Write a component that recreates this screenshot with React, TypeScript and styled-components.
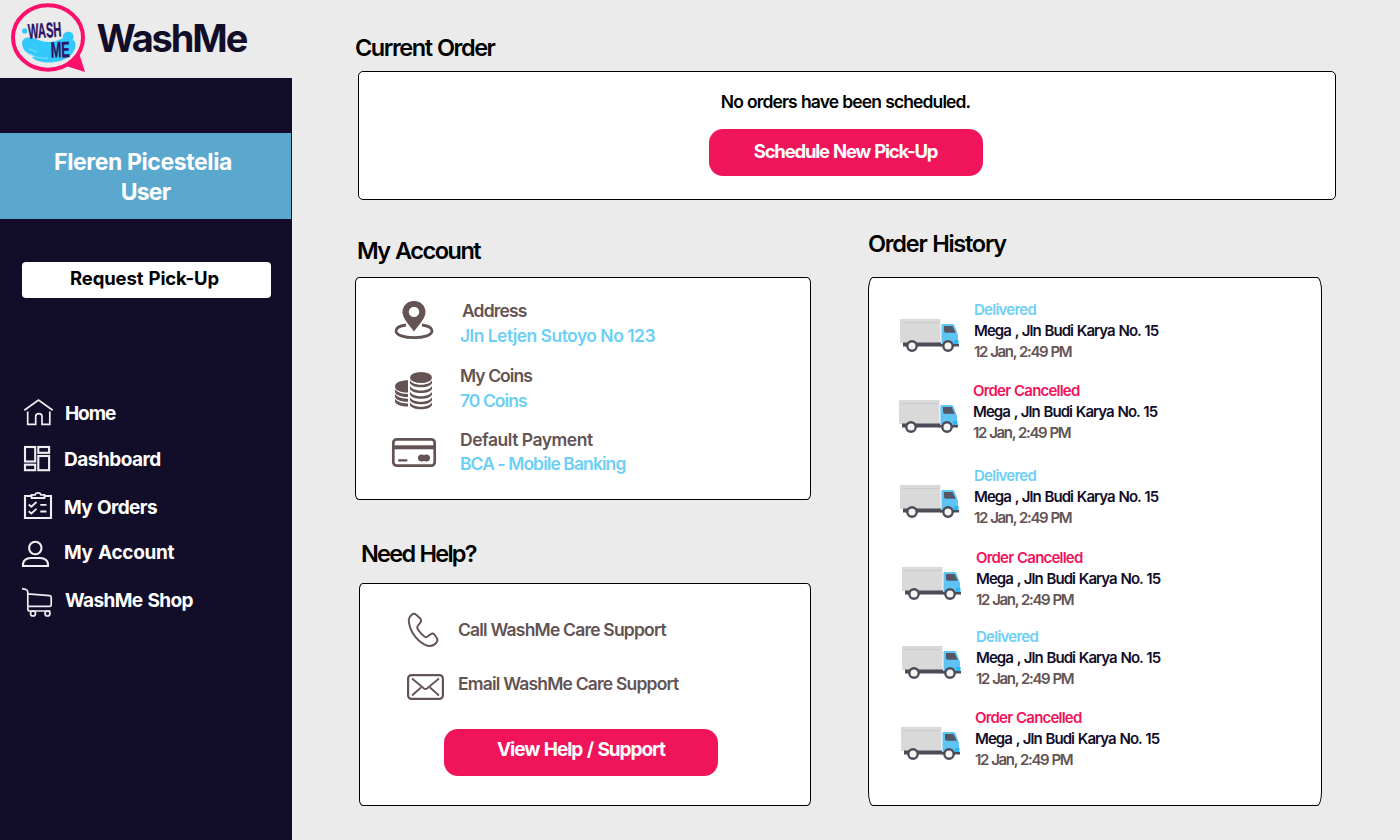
import React from "react";
import styled, { createGlobalStyle } from "styled-components";

const ink = "#120e2a";
const pink = "#f0145a";
const sky = "#6dcff6";
const brown = "#635353";

const GlobalStyle = createGlobalStyle`
  * { box-sizing: border-box; }
  body { margin: 0; background: #ebebeb; font-family: Inter, "Liberation Sans", sans-serif; }
  button { font-family: inherit; border: 0; padding: 0; cursor: pointer; }
  svg { display: block; flex: none; }
`;

const Page = styled.div`
  display: grid;
  grid-template-columns: 292px 1fr;
  width: 1400px;
  height: 840px;
  overflow: hidden;
  background: #ebebeb;
`;

const Side = styled.aside`
  display: flex;
  flex-direction: column;
`;

const Brand = styled.header`
  display: flex;
  align-items: center;
  height: 78px;
  padding-left: 8px;
`;

const BrandName = styled.h1`
  margin: 0 0 2px 6.5px;
  font-size: 38px;
  font-weight: 700;
  line-height: 40px;
  letter-spacing: -2.1px;
  color: ${ink};
`;

const SidePanel = styled.div`
  flex: 1;
  padding-top: 55px;
  background: ${ink};
`;

const UserBlock = styled.div`
  display: flex;
  flex-direction: column;
  align-items: center;
  width: 291px;
  height: 86px;
  padding: 14px 0 0;
  background: #5ba8cf;
  color: #fff;
  font-size: 23px;
  font-weight: 700;
  line-height: 30px;
`;

const UserLine = styled.span<{ $shift: number; $track: number }>`
  margin-left: ${(p) => p.$shift}px;
  letter-spacing: ${(p) => p.$track}px;
`;

const RequestButton = styled.button`
  display: block;
  width: 249px;
  height: 36px;
  margin: 43px 0 0 22px;
  padding: 0 4px 4px 0;
  border-radius: 4px;
  background: #fff;
  color: #000;
  font-size: 18.5px;
  font-weight: 650;
  letter-spacing: -0.15px;
  word-spacing: 1px;
`;

const Nav = styled.nav`
  display: flex;
  flex-direction: column;
  padding: 99px 0 0 20px;
`;

const NavItem = styled.a<{ $gap: number; $inset: number; $track: number }>`
  display: flex;
  align-items: center;
  height: 32px;
  margin-top: ${(p) => p.$gap}px;
  color: #fff;
  font-size: 19px;
  font-weight: 700;
  letter-spacing: ${(p) => p.$track}px;
  word-spacing: 1px;
  span { margin-left: ${(p) => p.$inset}px; }
`;

const Main = styled.main`
  padding: 33px 0 0 63px;
`;

const Heading = styled.h2<{ $inset?: number; $track: number }>`
  margin: 0 0 0 ${(p) => p.$inset ?? 0}px;
  font-size: 23.5px;
  font-weight: 620;
  line-height: 30px;
  letter-spacing: ${(p) => p.$track}px;
  word-spacing: 1px;
  white-space: nowrap;
  color: #000;
`;

const Card = styled.section<{ $w: number; $h: number; $radius: string }>`
  width: ${(p) => p.$w}px;
  height: ${(p) => p.$h}px;
  border: 1px solid #000;
  border-radius: ${(p) => p.$radius};
  background: #fff;
`;

const CurrentCard = styled(Card)`
  display: flex;
  flex-direction: column;
  align-items: center;
  margin: 8px 0 0 3px;
  padding: 18px 3px 0 0;
`;

const EmptyNote = styled.p`
  margin: 0 0 16px;
  font-size: 17.5px;
  font-weight: 600;
  line-height: 23px;
  letter-spacing: -0.9px;
  word-spacing: 0.7px;
  color: #000;
`;

const PinkButton = styled.button<{ $track: number; $size?: number }>`
  width: 274px;
  height: 47px;
  padding: 0 0 3px;
  border-radius: 14px;
  background: ${pink};
  color: #fff;
  font-size: ${(p) => p.$size ?? 19}px;
  font-weight: 700;
  letter-spacing: ${(p) => p.$track}px;
  word-spacing: 1px;
`;

const Columns = styled.div`
  display: grid;
  grid-template-columns: 513px 1fr;
  align-items: start;
`;

const LeftColumn = styled.div`
  padding-top: 36px;
`;

const RightColumn = styled.div`
  padding-top: 29px;
`;

const AccountCard = styled(Card)`
  margin-top: 11px;
  padding: 20px 0 0 35px;
`;

const AccountRow = styled.div<{ $gap: number }>`
  display: flex;
  height: 50px;
  margin-top: ${(p) => p.$gap}px;
  svg { margin-top: 1px; }
`;

const AccountText = styled.div`
  margin-left: 23px;
  font-size: 17.5px;
  font-weight: 570;
  white-space: nowrap;
`;

const AccountLabel = styled.div<{ $inset?: number; $track: number }>`
  padding-left: ${(p) => p.$inset ?? 0}px;
  line-height: 25px;
  letter-spacing: ${(p) => p.$track}px;
  color: ${brown};
`;

const AccountValue = styled.div<{ $track: number; $line?: number }>`
  line-height: ${(p) => p.$line ?? 25}px;
  letter-spacing: ${(p) => p.$track}px;
  color: ${sky};
`;

const HelpBlock = styled.div`
  padding-top: 39px;
`;

const HelpCard = styled(Card)`
  margin: 14px 0 0 4px;
  padding: 26px 0 0 44px;
`;

const HelpRow = styled.div<{ $gap: number; $track: number }>`
  display: flex;
  align-items: center;
  height: 40px;
  margin-top: ${(p) => p.$gap}px;
  font-size: 17.5px;
  font-weight: 570;
  letter-spacing: ${(p) => p.$track}px;
  color: ${brown};
  span { margin: 0 0 2px 10px; }
`;

const HelpAction = styled.div`
  padding: 25px 0 0 40px;
`;

const HelpButton = styled(PinkButton)`
  padding-bottom: 6px;
`;

const HistoryCard = styled(Card)`
  margin-top: 18px;
  padding: 21px 0 0 30px;
`;

const HistoryRow = styled.article<{ $gap: number; $shift: number }>`
  display: flex;
  height: 63px;
  margin-top: ${(p) => p.$gap}px;
  padding-left: ${(p) => p.$shift}px;
  svg { margin-top: 20px; }
`;

const OrderText = styled.div`
  margin-left: 14px;
  font-size: 15px;
  font-weight: 600;
  line-height: 21px;
  white-space: nowrap;
  word-spacing: 0.8px;
`;

const Status = styled.div<{ $cancelled: boolean }>`
  color: ${(p) => (p.$cancelled ? pink : sky)};
  letter-spacing: ${(p) => (p.$cancelled ? -0.8 : -0.75)}px;
`;

const Place = styled.div`
  color: ${ink};
  letter-spacing: -0.93px;
`;

const When = styled.div`
  color: ${brown};
  letter-spacing: -1.35px;
`;

const Logo = () => (
  <svg width="82" height="76" viewBox="8 1 82 76">
    <path d="M66 66 L85 72 L79 53 Z" fill="#ff0f6b" />
    <ellipse cx="48" cy="37.500" rx="35" ry="32.300" fill="#ebebeb" stroke="#ff0f6b" strokeWidth="4" />
    <circle cx="24.700" cy="31" r="2.700" fill="#33c9fc" />
    <path
      d="M22 42 C24 36 30 37 36 39 C45 43 54 43 63 38 C62 34 66 31 70 32 C74 33 74 37 73 40 C77 42 76 49 72 54 C65 61 55 63 46 62.500 C40 62 34 60 32 57 C36 57 34 55 30 54 C25 53 22 48 22 42 Z"
      fill="#33c9fc"
    />
    <path d="M26 52 C31 56 40 59 48 58 M29 49 L37 52" fill="none" stroke="#8fe0fb" strokeWidth="1" />
    <g fill="#2b1464" stroke="#2b1464" strokeWidth="0.400" fontFamily="Liberation Sans, sans-serif" fontWeight="700">
      <text fontSize="21" transform="translate(28.5 38.800) rotate(-4) scale(0.53 1)">
        WASH
      </text>
      <text fontSize="22" transform="translate(51 57.500) rotate(-2) scale(0.58 1)">
        ME
      </text>
    </g>
  </svg>
);

const navStroke = { fill: "none", stroke: "#efeef3" };

const HomeIcon = () => (
  <svg width="34" height="32" viewBox="20 397 34 32" {...navStroke} strokeWidth="1.700">
    <path d="M24.300 410.300 L38.500 400 L52.700 410.300" />
    <path d="M27.700 411.500 V424.300 H35.700 V416.500 C35.700 412.600 42 412.600 42 416.500 V424.300 H49.800 V411.500" />
  </svg>
);

const DashboardIcon = () => (
  <svg width="34" height="32" viewBox="20 443 34 32" {...navStroke} strokeWidth="2.100">
    <rect x="25" y="447" width="10.200" height="14.500" />
    <rect x="38.300" y="447" width="10.800" height="5.800" />
    <rect x="25" y="464.700" width="10.200" height="5.500" />
    <rect x="38.300" y="456" width="10.800" height="14.200" />
  </svg>
);

const OrdersIcon = () => (
  <svg width="34" height="32" viewBox="20 491 34 32" {...navStroke} strokeWidth="2.100">
    <path d="M31 496 H25 V518 H51 V496 H45" />
    <path d="M31.500 498 V494.800 H35 C36 492.300 40 492.300 41 494.800 H44.500 V498 Z" strokeWidth="1.800" />
    <path d="M28.700 504.500 L31.300 506.700 L36.500 502 M28.700 511.300 L31.300 513.500 L36.500 508.800 M40.300 504.800 H46.500 M40.300 511.500 H46.500" strokeWidth="1.800" />
  </svg>
);

const AccountIcon = () => (
  <svg width="34" height="32" viewBox="20 536 34 32" {...navStroke} strokeWidth="2.100">
    <circle cx="35.300" cy="548" r="6.200" />
    <path d="M23 566 C22.500 560.500 26 558 31 558 H40 C45 558 48.500 560.500 48 566 Z" />
  </svg>
);

const CartIcon = () => (
  <svg width="34" height="34" viewBox="20 583 34 34" {...navStroke} strokeWidth="1.700">
    <path d="M22 588.700 L25.500 589.300 C27 589.700 27.700 590.500 27.800 592 V606.500 M27.800 593.800 L49.500 595.600 C50.800 595.700 51.200 596.300 51.200 597.300 V604.500 C51.200 605.700 50.500 606.300 49.500 606.300 H29 C27 607 27.500 611 29.500 611 H50.500" />
    <circle cx="33" cy="613.500" r="2.500" />
    <circle cx="47.500" cy="613.500" r="2.500" />
  </svg>
);

const PinIcon = () => (
  <svg width="46" height="50" viewBox="391 299 46 50">
    <path
      fillRule="evenodd"
      fill={brown}
      d="M414 301 C420.600 301 425.500 305.800 425.500 312 C425.500 318.500 419 324.500 414 331.500 C409 324.500 402.500 318.500 402.500 312 C402.500 305.800 407.400 301 414 301 Z M414 306.700 A5.200 5.200 0 1 0 414 317.100 A5.200 5.200 0 1 0 414 306.700 Z"
    />
    <path d="M406 325 C400 325.800 396 328 396 331 C396 335 404 337.700 414 337.700 C424 337.700 432 335 432 331 C432 328 428 325.800 422 325" fill="none" stroke={brown} strokeWidth="2.800" />
  </svg>
);

const CoinsIcon = () => (
  <svg width="46" height="50" viewBox="391 364 46 50">
    <ellipse cx="421" cy="377.500" rx="11" ry="5.500" fill={brown} />
    <path d="M408 380.300 C401 380.300 395 382.500 395 386.500 C395 390.500 401 392.500 408 392.500 Z" fill={brown} />
    <g fill={brown}>
      {[0, 5.7, 11.4, 17, 22].map((dy) => (
        <path key={dy} transform={`translate(0 ${dy})`} d="M410 380.300 C413 386.300 429 386.300 432 380.300 V383 C430.500 388.700 411.500 388.700 410 383 Z" />
      ))}
      {[0, 4.8, 9.4].map((dy) => (
        <path key={dy} transform={`translate(0 ${dy})`} d="M395 389.300 C397 392.300 402 394 408 394 V397 C401 397 396 395.500 395 392 Z" />
      ))}
    </g>
  </svg>
);

const PaymentIcon = () => (
  <svg width="46" height="50" viewBox="391 428 46 50">
    <rect x="393.300" y="439.300" width="41.400" height="26.400" rx="3.500" fill="none" stroke={brown} strokeWidth="2.700" />
    <rect x="393" y="445.300" width="42" height="4" fill={brown} />
    <rect x="398" y="459.200" width="9.500" height="2.300" rx="1" fill={brown} />
    <circle cx="421.600" cy="458" r="3.600" fill={brown} />
    <circle cx="426.400" cy="458" r="3.600" fill={brown} />
  </svg>
);

const PhoneIcon = () => (
  <svg width="44" height="40" viewBox="404 610 44 40" fill="none" stroke={brown} strokeWidth="1.900" strokeLinejoin="round">
    <path d="M412 614.600 C413.500 613.500 415 613.600 416.200 614.800 L420.300 618.500 C421.500 620 421.300 621.300 420.300 622.700 L417.600 626 C417 627 417.200 628.300 417.900 629.400 C419.800 632.300 422 634.600 424.700 636.700 C425.700 637.400 426.700 637.300 427.600 636.600 L430.600 634.200 C432 633.200 433.500 633.300 434.500 634.500 L436.800 638 C437.700 639.500 437.500 641.300 436.400 642.600 C434.500 645 432.500 646 430 646 C426.500 646 422.700 644 418.800 640.500 C414 636 410 629.500 408.900 622.500 C408.400 619 409.300 616.500 412 614.600 Z" />
  </svg>
);

const MailIcon = () => (
  <svg width="44" height="40" viewBox="404 664 44 40" fill="none" stroke={brown} strokeWidth="2.200" strokeLinejoin="round">
    <rect x="408.100" y="675.100" width="34.800" height="23.800" rx="3.500" />
    <path d="M412 678.500 L424 688.500 Q425.500 689.500 427 688.500 L439 678.500 M412 695.500 L421 687.500 M439 695.500 L430 687.500" strokeWidth="1.800" />
  </svg>
);

const TruckIcon = () => (
  <svg width="60" height="34" viewBox="0 0 60 34">
    <rect x="0" y="0" width="40.500" height="24" fill="#d9d9da" />
    <path d="M2 3.500 H39" stroke="#cbcbcd" strokeWidth="1" />
    <path d="M3 23.500 H41 V27.500 H3 Z" fill="#4d4b58" />
    <path d="M41.500 6 Q41.500 5 42.500 5 H52 C53.500 5 54 5.500 54.500 6.500 L58 16 V26.500 H41.500 Z" fill="#5fc3f4" />
    <path d="M44 7 H52.500 L55.800 13.800 H46.500 C45 13.800 44 13 44 11.500 Z" fill="#555665" />
    <path d="M54 21 H58.500 V25.500 H54 Z" fill="#2bb5f2" />
    <path d="M40 25 H59 V27.500 H40 Z" fill="#4d4b58" />
    <circle cx="12" cy="27" r="4.700" fill="#f4f4f4" stroke="#4d4b58" strokeWidth="2.400" />
    <circle cx="48" cy="27" r="4.700" fill="#f4f4f4" stroke="#4d4b58" strokeWidth="2.400" />
  </svg>
);

const navItems = [
  { label: "Home", icon: <HomeIcon />, gap: 0, inset: 11, track: -1.1 },
  { label: "Dashboard", icon: <DashboardIcon />, gap: 14, inset: 10, track: -0.5 },
  { label: "My Orders", icon: <OrdersIcon />, gap: 16, inset: 10, track: -0.6 },
  { label: "My Account", icon: <AccountIcon />, gap: 13, inset: 10, track: -0.3 },
  { label: "WashMe Shop", icon: <CartIcon />, gap: 16, inset: 11, track: -0.6 },
];

const orders = [
  { cancelled: false, gap: 0, shift: 1 },
  { cancelled: true, gap: 18, shift: 0 },
  { cancelled: false, gap: 22, shift: 1 },
  { cancelled: true, gap: 19, shift: 3 },
  { cancelled: false, gap: 16, shift: 3 },
  { cancelled: true, gap: 18, shift: 2 },
];

export default function App() {
  return (
    <>
      <GlobalStyle />
      <Page>
        <Side>
          <Brand>
            <Logo />
            <BrandName>WashMe</BrandName>
          </Brand>
          <SidePanel>
            <UserBlock>
              <UserLine $shift={-5} $track={-0.4}>Fleren Picestelia</UserLine>
              <UserLine $shift={0} $track={-0.8}>User</UserLine>
            </UserBlock>
            <RequestButton>Request Pick-Up</RequestButton>
            <Nav>
              {navItems.map((n) => (
                <NavItem key={n.label} $gap={n.gap} $inset={n.inset} $track={n.track}>
                  {n.icon}
                  <span>{n.label}</span>
                </NavItem>
              ))}
            </Nav>
          </SidePanel>
        </Side>
        <Main>
          <Heading $track={-1.45}>Current Order</Heading>
          <CurrentCard $w={978} $h={129} $radius="5px">
            <EmptyNote>No orders have been scheduled.</EmptyNote>
            <PinkButton $size={18.5} $track={-1.2}>Schedule New Pick-Up</PinkButton>
          </CurrentCard>
          <Columns>
            <LeftColumn>
              <Heading $inset={2} $track={-1.5}>My Account</Heading>
              <AccountCard $w={456} $h={223} $radius="4px / 6px">
                <AccountRow $gap={0}>
                  <PinIcon />
                  <AccountText>
                    <AccountLabel $inset={2} $track={-0.85}>Address</AccountLabel>
                    <AccountValue $track={-0.53}>Jln Letjen Sutoyo No 123</AccountValue>
                  </AccountText>
                </AccountRow>
                <AccountRow $gap={15}>
                  <CoinsIcon />
                  <AccountText>
                    <AccountLabel $track={-0.95}>My Coins</AccountLabel>
                    <AccountValue $track={-0.95}>70 Coins</AccountValue>
                  </AccountText>
                </AccountRow>
                <AccountRow $gap={14}>
                  <PaymentIcon />
                  <AccountText>
                    <AccountLabel $track={-0.48}>Default Payment</AccountLabel>
                    <AccountValue $track={-0.92} $line={24}>BCA - Mobile Banking</AccountValue>
                  </AccountText>
                </AccountRow>
              </AccountCard>
              <HelpBlock>
                <Heading $inset={6} $track={-1.75}>Need Help?</Heading>
                <HelpCard $w={452} $h={223} $radius="4px / 6px">
                  <HelpRow $gap={0} $track={-0.8}>
                    <PhoneIcon />
                    <span>Call WashMe Care Support</span>
                  </HelpRow>
                  <HelpRow $gap={14} $track={-0.8}>
                    <MailIcon />
                    <span>Email WashMe Care Support</span>
                  </HelpRow>
                  <HelpAction>
                    <HelpButton $track={-1.05}>View Help / Support</HelpButton>
                  </HelpAction>
                </HelpCard>
              </HelpBlock>
            </LeftColumn>
            <RightColumn>
              <Heading $track={-1.25}>Order History</Heading>
              <HistoryCard $w={454} $h={529} $radius="5px / 14px">
                {orders.map((o, i) => (
                  <HistoryRow key={i} $gap={o.gap} $shift={o.shift}>
                    <TruckIcon />
                    <OrderText>
                      <Status $cancelled={o.cancelled}>{o.cancelled ? "Order Cancelled" : "Delivered"}</Status>
                      <Place>Mega , Jln Budi Karya No. 15</Place>
                      <When>12 Jan, 2:49 PM</When>
                    </OrderText>
                  </HistoryRow>
                ))}
              </HistoryCard>
            </RightColumn>
          </Columns>
        </Main>
      </Page>
    </>
  );
}
